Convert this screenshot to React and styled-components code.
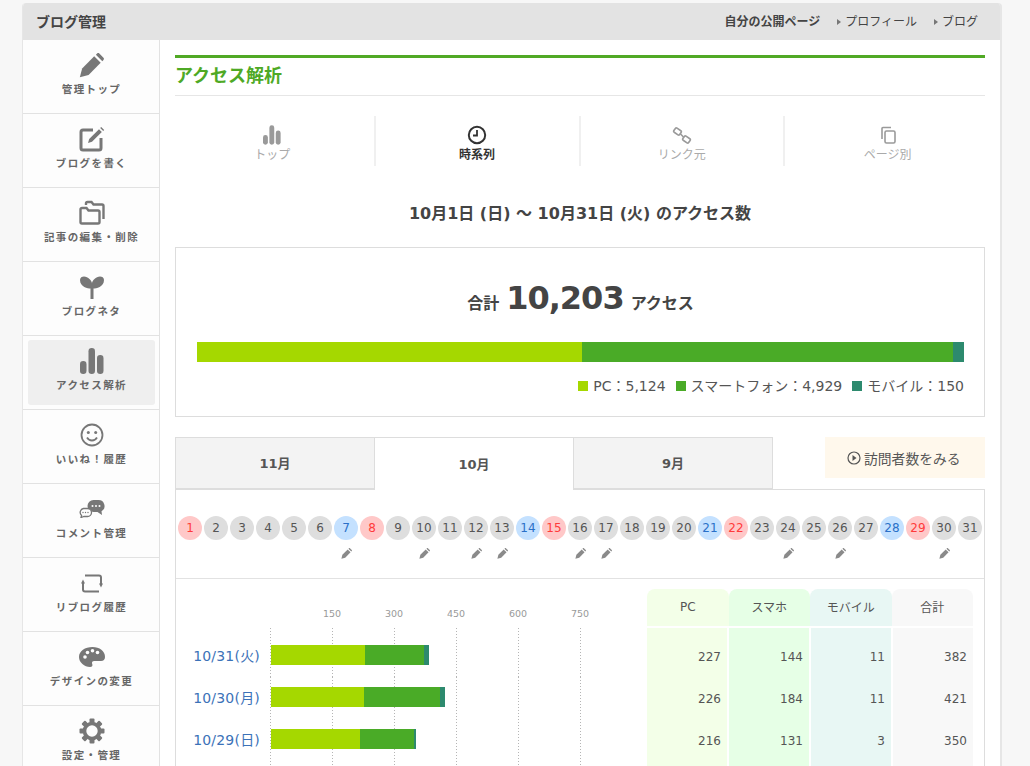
import styled, { createGlobalStyle } from "styled-components";

const LIME = "#a5d800";
const GREEN = "#4aab27";
const TEAL = "#2d8a6e";
const PX_PER_VISIT = 62 / 150;

const GlobalStyle = createGlobalStyle`
  html, body {
    margin: 0;
    height: 100%;
    overflow: hidden;
    background: #f7f7f7;
  }
  body {
    font-family: "DejaVu Sans", "Noto Sans CJK JP", sans-serif;
    color: #444;
  }
  * { box-sizing: border-box; }
`;

const Page = styled.div`
  width: 980px;
  margin: 3px 0 0 22px;
  height: 763px;
  overflow: hidden;
  border-radius: 4px 4px 0 0;
  border-right: 2px solid #e6e6e6;
  border-left: 1px solid #e6e6e6;
  background: #fff;
`;

const TopBar = styled.header`
  height: 37px;
  display: flex;
  align-items: center;
  justify-content: space-between;
  padding: 0 22px 2px 13px;
  background: #e3e3e3;
`;

const BarTitle = styled.span`
  font-size: 14px;
  font-weight: 700;
  color: #444;
`;

const TopLinks = styled.nav`
  display: flex;
  align-items: center;
  gap: 15px;
  font-size: 12px;
  color: #444;
`;

const OwnLink = styled.span`
  font-weight: 700;
`;

const TopLink = styled.span`
  margin-left: 2px;
  &::before {
    content: "";
    display: inline-block;
    margin-right: 4px;
    border-left: 4px solid #777;
    border-top: 3px solid transparent;
    border-bottom: 3px solid transparent;
    vertical-align: 1px;
  }
`;

const Columns = styled.div`
  display: flex;
  align-items: stretch;
`;

const Sidebar = styled.aside`
  width: 137px;
  flex-shrink: 0;
  background: #fdfdfd;
  border-right: 1px solid #e2e2e2;
`;

const SideItem = styled.div`
  height: 74px;
  border-bottom: 1px solid #e2e2e2;
  padding: ${({ $active }) => ($active ? "4px 4px 4px 5px" : "0 0 0 1px")};
`;

const SideInner = styled.div`
  height: 100%;
  display: flex;
  flex-direction: column;
  align-items: center;
  padding-top: ${({ $active }) => ($active ? "8px" : "12px")};
  border-radius: 3px;
  background: ${({ $active }) => ($active ? "#efefef" : "transparent")};
  color: #777;
`;

const SideIcon = styled.div`
  height: 26px;
  display: flex;
  align-items: center;
  justify-content: center;
`;

const SideLabel = styled.span`
  margin-top: 3px;
  font-size: 10.5px;
  line-height: 16px;
  font-weight: 700;
  letter-spacing: 1.4px;
  color: #666;
  white-space: nowrap;
`;

const Main = styled.main`
  flex: 1;
  min-width: 0;
  padding: 15px 15px 0;
`;

const PageTitle = styled.h1`
  margin: 0;
  height: 41px;
  border-top: 3px solid #50a925;
  border-bottom: 1px solid #e6e6e6;
  font-size: 18px;
  line-height: 35px;
  font-weight: 700;
  color: #4ea925;
`;

const ReportNav = styled.nav`
  display: flex;
  margin: 20px -5px 0 -4px;
`;

const ReportTab = styled.div`
  width: 205px;
  height: 50px;
  display: flex;
  flex-direction: column;
  align-items: center;
  border-right: 2px solid #f0f0f0;
  color: ${({ $active }) => ($active ? "#333" : "#9a9a9a")};
  &:last-child { border-right: 0; }
`;

const ReportIcon = styled.div`
  height: 20px;
  margin-top: 9px;
  display: flex;
  align-items: center;
  justify-content: center;
`;

const ReportLabel = styled.span`
  margin-top: 1px;
  font-size: 12px;
  line-height: 18px;
  font-weight: ${({ $active }) => ($active ? 700 : 400)};
  color: ${({ $active }) => ($active ? "#333" : "#aaa")};
`;

const RangeTitle = styled.h2`
  margin: 37px 0 22px;
  font-size: 16px;
  line-height: 22px;
  font-weight: 700;
  text-align: center;
  color: #444;
`;

const SummaryBox = styled.section`
  height: 170px;
  border: 1px solid #ddd;
  padding: 0 20px 0 21px;
`;

const TotalLine = styled.div`
  margin-top: 25px;
  height: 50px;
  display: flex;
  align-items: baseline;
  justify-content: center;
  gap: 7px;
  font-size: 16px;
  font-weight: 700;
  color: #444;
`;

const TotalNumber = styled.span`
  font-size: 32px;
  line-height: 50px;
  letter-spacing: -1px;
`;

const ShareBar = styled.div`
  display: flex;
  height: 20px;
  margin-top: 19px;
`;

const ShareSegment = styled.div`
  flex: ${({ $value }) => $value} 0 0;
  background: ${({ $color }) => $color};
`;

const Legend = styled.div`
  margin-top: 14px;
  display: flex;
  justify-content: flex-end;
  gap: 10px;
  font-size: 14px;
  line-height: 20px;
  color: #555;
`;

const LegendItem = styled.span`
  display: flex;
  align-items: center;
  gap: 5px;
`;

const Swatch = styled.i`
  width: 10px;
  height: 10px;
  background: ${({ $color }) => $color};
`;

const MonthRow = styled.div`
  display: flex;
  align-items: flex-start;
  height: 52px;
  margin-top: 20px;
`;

const MonthTab = styled.div`
  position: relative;
  z-index: ${({ $active }) => ($active ? 1 : 0)};
  width: 200px;
  height: ${({ $active }) => ($active ? "53px" : "52px")};
  margin-right: -1px;
  padding-bottom: 2px;
  display: flex;
  align-items: center;
  justify-content: center;
  border: 1px solid #ddd;
  border-bottom: ${({ $active }) => ($active ? "0" : "1px solid #ddd")};
  background: ${({ $active }) => ($active ? "#fff" : "#f3f3f3")};
  font-size: 13px;
  font-weight: 700;
  color: #555;
`;

const VisitorButton = styled.div`
  margin-left: auto;
  width: 160px;
  height: 41px;
  display: flex;
  align-items: center;
  gap: 3px;
  padding-left: 22px;
  background: #fff8ec;
  font-size: 13.8px;
  color: #555;
`;

const Panel = styled.section`
  border: 1px solid #ddd;
  border-bottom: 0;
`;

const DayStrip = styled.div`
  height: 89px;
  display: flex;
  padding: 26px 0 0 1px;
  border-bottom: 1px solid #e2e2e2;
`;

const DayColumn = styled.div`
  width: 26px;
  display: flex;
  flex-direction: column;
  align-items: center;
`;

const dayColors = {
  weekday: { bg: "#dedede", fg: "#555" },
  sat: { bg: "#c4e1ff", fg: "#2a70c8" },
  sun: { bg: "#ffc8c8", fg: "#ff3b3b" },
};

const DayDot = styled.div`
  width: 24px;
  height: 24px;
  border-radius: 50%;
  display: flex;
  align-items: center;
  justify-content: center;
  font-size: 12px;
  background: ${({ $kind }) => dayColors[$kind].bg};
  color: ${({ $kind }) => dayColors[$kind].fg};
`;

const PostMark = styled.div`
  margin-top: 8px;
  height: 12px;
  line-height: 0;
  color: #8a8a8a;
`;

const ChartTable = styled.div`
  padding: 10px 11px 20px 0;
`;

const ChartRow = styled.div`
  display: flex;
`;

const HeadSpacer = styled.div`
  width: 94px;
  flex-shrink: 0;
`;

const Axis = styled.div`
  width: 377px;
  flex-shrink: 0;
  display: flex;
  align-items: flex-end;
  padding: 0 0 7px 31px;
`;

const AxisLabel = styled.span`
  width: 62px;
  font-size: 9.5px;
  line-height: 14px;
  text-align: center;
  color: #999;
`;

const columnColors = ["#f3ffe8", "#e6ffe6", "#e8f7f4", "#f8f8f8"];

const HeadCell = styled.div`
  width: 81.5px;
  height: 37px;
  margin-bottom: 2px;
  padding-bottom: 2px;
  display: flex;
  align-items: center;
  justify-content: center;
  border-radius: 8px 8px 0 0;
  background: ${({ $index }) => columnColors[$index]};
  font-size: 12px;
  color: #555;
`;

const DateLabel = styled.div`
  width: 94px;
  flex-shrink: 0;
  padding: ${({ $first }) => ($first ? "21px" : "14px")} 10px 0 0;
  text-align: right;
  font-size: 14px;
  line-height: 14px;
  letter-spacing: 0.2px;
  color: #3c72b8;
`;

const gridLines = [0, 62, 124, 186, 248, 310];

const Track = styled.div`
  width: 377px;
  flex-shrink: 0;
  padding: ${({ $first }) => ($first ? "17px" : "10px")} 0 0 1px;
  height: ${({ $first }) => ($first ? "49px" : "42px")};
  background-image: ${gridLines.map(() => "linear-gradient(#b5b5b5 1px, transparent 1px)").join(",")};
  background-size: 1px 3px;
  background-repeat: repeat-y;
  background-position: ${gridLines.map((x) => `${x}px 0`).join(",")};
`;

const StackedBar = styled.div`
  display: flex;
  height: 20px;
`;

const BarPart = styled.div`
  background: ${({ $color }) => $color};
`;

const ValueCell = styled.div`
  width: 80px;
  margin-right: ${({ $last }) => ($last ? "0" : "2px")};
  padding: ${({ $first }) => ($first ? "21px" : "14px")} 6px 0 0;
  text-align: right;
  font-size: 12px;
  line-height: 16px;
  color: #555;
  background: ${({ $index }) => columnColors[$index]};
  height: ${({ $first }) => ($first ? "49px" : "42px")};
`;

const Filler = styled(ChartRow)`
  height: 20px;
`;

const PencilIcon = ({ size = 24 }) => (
  <svg width={size} height={size} viewBox="0 0 24 24" fill="currentColor">
    <path d="M.8 23.2 3 14.8 14.6 3.2l6.2 6.2L9.2 21z" />
    <path d="M16.2 1.6 17.4.5c.6-.6 1.5-.6 2.1 0l4 4c.6.6.6 1.500 0 2.100l-1.100 1.200z" />
  </svg>
);

const WriteIcon = () => (
  <svg width="26" height="26" viewBox="0 0 26 26" fill="none">
    <path d="M14 4H4a2 2 0 0 0-2 2v16a2 2 0 0 0 2 2h16a2 2 0 0 0 2-2V12" stroke="currentColor" strokeWidth="3" />
    <path d="m9 17 1.200-4L20 3.200l2.800 2.800L13 15.800z" fill="currentColor" />
    <path d="m21.200 2 1-1 3 3-1 1z" fill="currentColor" />
  </svg>
);

const FoldersIcon = () => (
  <svg width="26" height="26" viewBox="0 0 26 26" fill="none" stroke="currentColor" strokeWidth="2.400">
    <path d="M1.500 22V9.500a1.500 1.500 0 0 1 1.500-1.500h4.500l2 2.500H19a1.500 1.500 0 0 1 1.500 1.500v10a1.500 1.500 0 0 1-1.500 1.500H3a1.500 1.500 0 0 1-1.500-1.500z" />
    <path d="M7 5V3.500A1.500 1.500 0 0 1 8.500 2h4l2 2.500H23a1.500 1.500 0 0 1 1.500 1.500v13" />
  </svg>
);

const SproutIcon = () => (
  <svg width="26" height="24" viewBox="0 0 26 24" fill="currentColor">
    <path d="M11.500 24V13.500C9 13.500 1 12 1 5c0-2.500 2-3.500 4-3.500 4 0 8 4 8 7 0-3 4-7 8-7 2 0 4 1 4 3.500 0 7-8 8.500-10.500 8.500V24z" />
  </svg>
);

const BarsIcon = ({ width = 24, height = 26 }) => (
  <svg width={width} height={height} viewBox="0 0 24 26" fill="currentColor">
    <rect x="0" y="13" width="6.500" height="13" rx="3.200" />
    <rect x="8.500" y="0" width="6.500" height="26" rx="3.200" />
    <rect x="17" y="7" width="6.500" height="19" rx="3.200" />
  </svg>
);

const SmileIcon = () => (
  <svg width="24" height="24" viewBox="0 0 24 24" fill="none" stroke="currentColor">
    <circle cx="12" cy="12" r="10.500" strokeWidth="1.800" />
    <circle cx="8.300" cy="9.500" r="1.500" fill="currentColor" stroke="none" />
    <circle cx="15.700" cy="9.500" r="1.500" fill="currentColor" stroke="none" />
    <path d="M7 14.500c1.200 2 3 3 5 3s3.800-1 5-3" strokeWidth="1.800" />
  </svg>
);

const ChatIcon = () => (
  <svg width="26" height="18" viewBox="0 0 26 18">
    <path d="M14.500 0h5a6 6 0 0 1 3 11.200L23 15l-4.500-3h-4a6 6 0 0 1 0-12z" fill="currentColor" />
    <circle cx="13.500" cy="6" r="1" fill="#fdfdfd" />
    <circle cx="17" cy="6" r="1" fill="#fdfdfd" />
    <circle cx="20.500" cy="6" r="1" fill="#fdfdfd" />
    <path d="M4.500 8.500h4a4 4 0 0 1 0 8H5l-3 1 .6-2A4 4 0 0 1 4.500 8.500z" fill="#fdfdfd" stroke="currentColor" strokeWidth="1.300" />
    <circle cx="4" cy="12.500" r=".7" fill="currentColor" />
    <circle cx="6.500" cy="12.500" r=".7" fill="currentColor" />
    <circle cx="9" cy="12.500" r=".7" fill="currentColor" />
  </svg>
);

const ReblogIcon = () => (
  <svg width="22" height="19" viewBox="0 0 22 19" fill="none">
    <path d="M4 1.500h14a2 2 0 0 1 2 2V10" stroke="currentColor" strokeWidth="2" />
    <path d="M18 17.500H4a2 2 0 0 1-2-2V9" stroke="currentColor" strokeWidth="2" />
    <path d="M0 9.500 2 5.500 4 9.500zM18 9.500 20 13.500 22 9.500z" fill="currentColor" />
  </svg>
);

const PaletteIcon = () => (
  <svg width="26" height="20" viewBox="0 0 26 20">
    <path d="M13.500 0C6 0 0 4 0 10c0 5.500 5.500 10 11 10 2.500 0 2.800-1.500 2.200-3-.7-1.700.3-3 2-3H22c2.500 0 4-1.500 4-4C26 4 20.500 0 13.500 0z" fill="currentColor" />
    <circle cx="6" cy="10" r="1.800" fill="#fdfdfd" />
    <circle cx="8.500" cy="5.500" r="1.800" fill="#fdfdfd" />
    <circle cx="13.500" cy="3.800" r="1.800" fill="#fdfdfd" />
    <circle cx="18.500" cy="5.500" r="1.800" fill="#fdfdfd" />
  </svg>
);

const GearIcon = () => (
  <svg width="26" height="26" viewBox="0 0 26 26">
    <circle cx="13" cy="13" r="7.500" fill="none" stroke="currentColor" strokeWidth="3.600" />
    {[0, 45, 90, 135, 180, 225, 270, 315].map((angle) => (
      <rect key={angle} x="10.500" y="0.500" width="5" height="5" rx="1" fill="currentColor" transform={`rotate(${angle} 13 13)`} />
    ))}
  </svg>
);

const ClockIcon = () => (
  <svg width="20" height="20" viewBox="0 0 20 20" fill="none" stroke="currentColor">
    <circle cx="10" cy="10" r="8.200" strokeWidth="2" />
    <path d="M10 5v5.500H6" strokeWidth="1.800" />
  </svg>
);

const ChainIcon = () => (
  <svg width="20" height="17" viewBox="0 0 20 17" fill="none" stroke="currentColor" strokeWidth="1.600">
    <rect x="2" y="2" width="7" height="5" rx="1.200" transform="rotate(35 5.500 4.500)" />
    <rect x="11" y="10" width="7" height="5" rx="1.200" transform="rotate(35 14.500 12.500)" />
    <path d="m8.500 7 3 3" />
  </svg>
);

const PagesIcon = () => (
  <svg width="16" height="18" viewBox="0 0 16 18" fill="none" stroke="currentColor" strokeWidth="1.600">
    <path d="M2 13V2.500a1 1 0 0 1 1-1h8" />
    <rect x="5" y="5" width="10" height="12" rx="1.500" />
  </svg>
);

const PlayCircleIcon = () => (
  <svg width="14" height="14" viewBox="0 0 14 14">
    <circle cx="7" cy="7" r="6" fill="none" stroke="currentColor" strokeWidth="1.200" />
    <path d="M5.500 4 9.500 7l-4 3z" fill="currentColor" />
  </svg>
);

const sideItems = [
  { label: "管理トップ", icon: <PencilIcon size={25} /> },
  { label: "ブログを書く", icon: <WriteIcon /> },
  { label: "記事の編集・削除", icon: <FoldersIcon /> },
  { label: "ブログネタ", icon: <SproutIcon /> },
  { label: "アクセス解析", icon: <BarsIcon />, active: true },
  { label: "いいね！履歴", icon: <SmileIcon /> },
  { label: "コメント管理", icon: <ChatIcon /> },
  { label: "リブログ履歴", icon: <ReblogIcon /> },
  { label: "デザインの変更", icon: <PaletteIcon /> },
  { label: "設定・管理", icon: <GearIcon /> },
];

const reportTabs = [
  { label: "トップ", icon: <BarsIcon width={18} height={20} /> },
  { label: "時系列", icon: <ClockIcon />, active: true },
  { label: "リンク元", icon: <ChainIcon /> },
  { label: "ページ別", icon: <PagesIcon /> },
];

const saturdays = [7, 14, 21, 28];
const sundays = [1, 8, 15, 22, 29];
const postedDays = [7, 10, 12, 13, 16, 17, 24, 26, 30];
const days = Array.from({ length: 31 }, (_, i) => i + 1);

const dayKind = (day) => {
  if (saturdays.includes(day)) return "sat";
  if (sundays.includes(day)) return "sun";
  return "weekday";
};

const rows = [
  { date: "10/31(火)", pc: 227, phone: 144, mobile: 11, total: 382 },
  { date: "10/30(月)", pc: 226, phone: 184, mobile: 11, total: 421 },
  { date: "10/29(日)", pc: 216, phone: 131, mobile: 3, total: 350 },
];

const App = () => (
  <>
    <GlobalStyle />
    <Page>
      <TopBar>
        <BarTitle>ブログ管理</BarTitle>
        <TopLinks>
          <OwnLink>自分の公開ページ</OwnLink>
          <TopLink>プロフィール</TopLink>
          <TopLink>ブログ</TopLink>
        </TopLinks>
      </TopBar>
      <Columns>
        <Sidebar>
          {sideItems.map((item) => (
            <SideItem key={item.label} $active={item.active}>
              <SideInner $active={item.active}>
                <SideIcon>{item.icon}</SideIcon>
                <SideLabel>{item.label}</SideLabel>
              </SideInner>
            </SideItem>
          ))}
        </Sidebar>
        <Main>
          <PageTitle>アクセス解析</PageTitle>
          <ReportNav>
            {reportTabs.map((tab) => (
              <ReportTab key={tab.label} $active={tab.active}>
                <ReportIcon>{tab.icon}</ReportIcon>
                <ReportLabel $active={tab.active}>{tab.label}</ReportLabel>
              </ReportTab>
            ))}
          </ReportNav>
          <RangeTitle>10月1日 (日) 〜 10月31日 (火) のアクセス数</RangeTitle>
          <SummaryBox>
            <TotalLine>
              合計 <TotalNumber>10,203</TotalNumber> アクセス
            </TotalLine>
            <ShareBar>
              <ShareSegment $value={5124} $color={LIME} />
              <ShareSegment $value={4929} $color={GREEN} />
              <ShareSegment $value={150} $color={TEAL} />
            </ShareBar>
            <Legend>
              <LegendItem><Swatch $color={LIME} />PC：5,124</LegendItem>
              <LegendItem><Swatch $color={GREEN} />スマートフォン：4,929</LegendItem>
              <LegendItem><Swatch $color={TEAL} />モバイル：150</LegendItem>
            </Legend>
          </SummaryBox>
          <MonthRow>
            <MonthTab>11月</MonthTab>
            <MonthTab $active>10月</MonthTab>
            <MonthTab>9月</MonthTab>
            <VisitorButton>
              <PlayCircleIcon />
              訪問者数をみる
            </VisitorButton>
          </MonthRow>
          <Panel>
            <DayStrip>
              {days.map((day) => (
                <DayColumn key={day}>
                  <DayDot $kind={dayKind(day)}>{day}</DayDot>
                  {postedDays.includes(day) && (
                    <PostMark><PencilIcon size={11} /></PostMark>
                  )}
                </DayColumn>
              ))}
            </DayStrip>
            <ChartTable>
              <ChartRow>
                <HeadSpacer />
                <Axis>
                  {[150, 300, 450, 600, 750].map((tick) => (
                    <AxisLabel key={tick}>{tick}</AxisLabel>
                  ))}
                </Axis>
                {["PC", "スマホ", "モバイル", "合計"].map((name, i) => (
                  <HeadCell key={name} $index={i}>{name}</HeadCell>
                ))}
              </ChartRow>
              {rows.map((row, r) => (
                <ChartRow key={row.date}>
                  <DateLabel $first={r === 0}>{row.date}</DateLabel>
                  <Track $first={r === 0}>
                    <StackedBar>
                      <BarPart $color={LIME} style={{ width: row.pc * PX_PER_VISIT }} />
                      <BarPart $color={GREEN} style={{ width: row.phone * PX_PER_VISIT }} />
                      <BarPart $color={TEAL} style={{ width: row.mobile * PX_PER_VISIT }} />
                    </StackedBar>
                  </Track>
                  {[row.pc, row.phone, row.mobile, row.total].map((value, i) => (
                    <ValueCell key={i} $index={i} $first={r === 0} $last={i === 3}>{value}</ValueCell>
                  ))}
                </ChartRow>
              ))}
              <Filler>
                <HeadSpacer />
                <Track />
                {[0, 1, 2, 3].map((i) => (
                  <ValueCell key={i} $index={i} $last={i === 3} />
                ))}
              </Filler>
            </ChartTable>
          </Panel>
        </Main>
      </Columns>
    </Page>
  </>
);

export default App;
